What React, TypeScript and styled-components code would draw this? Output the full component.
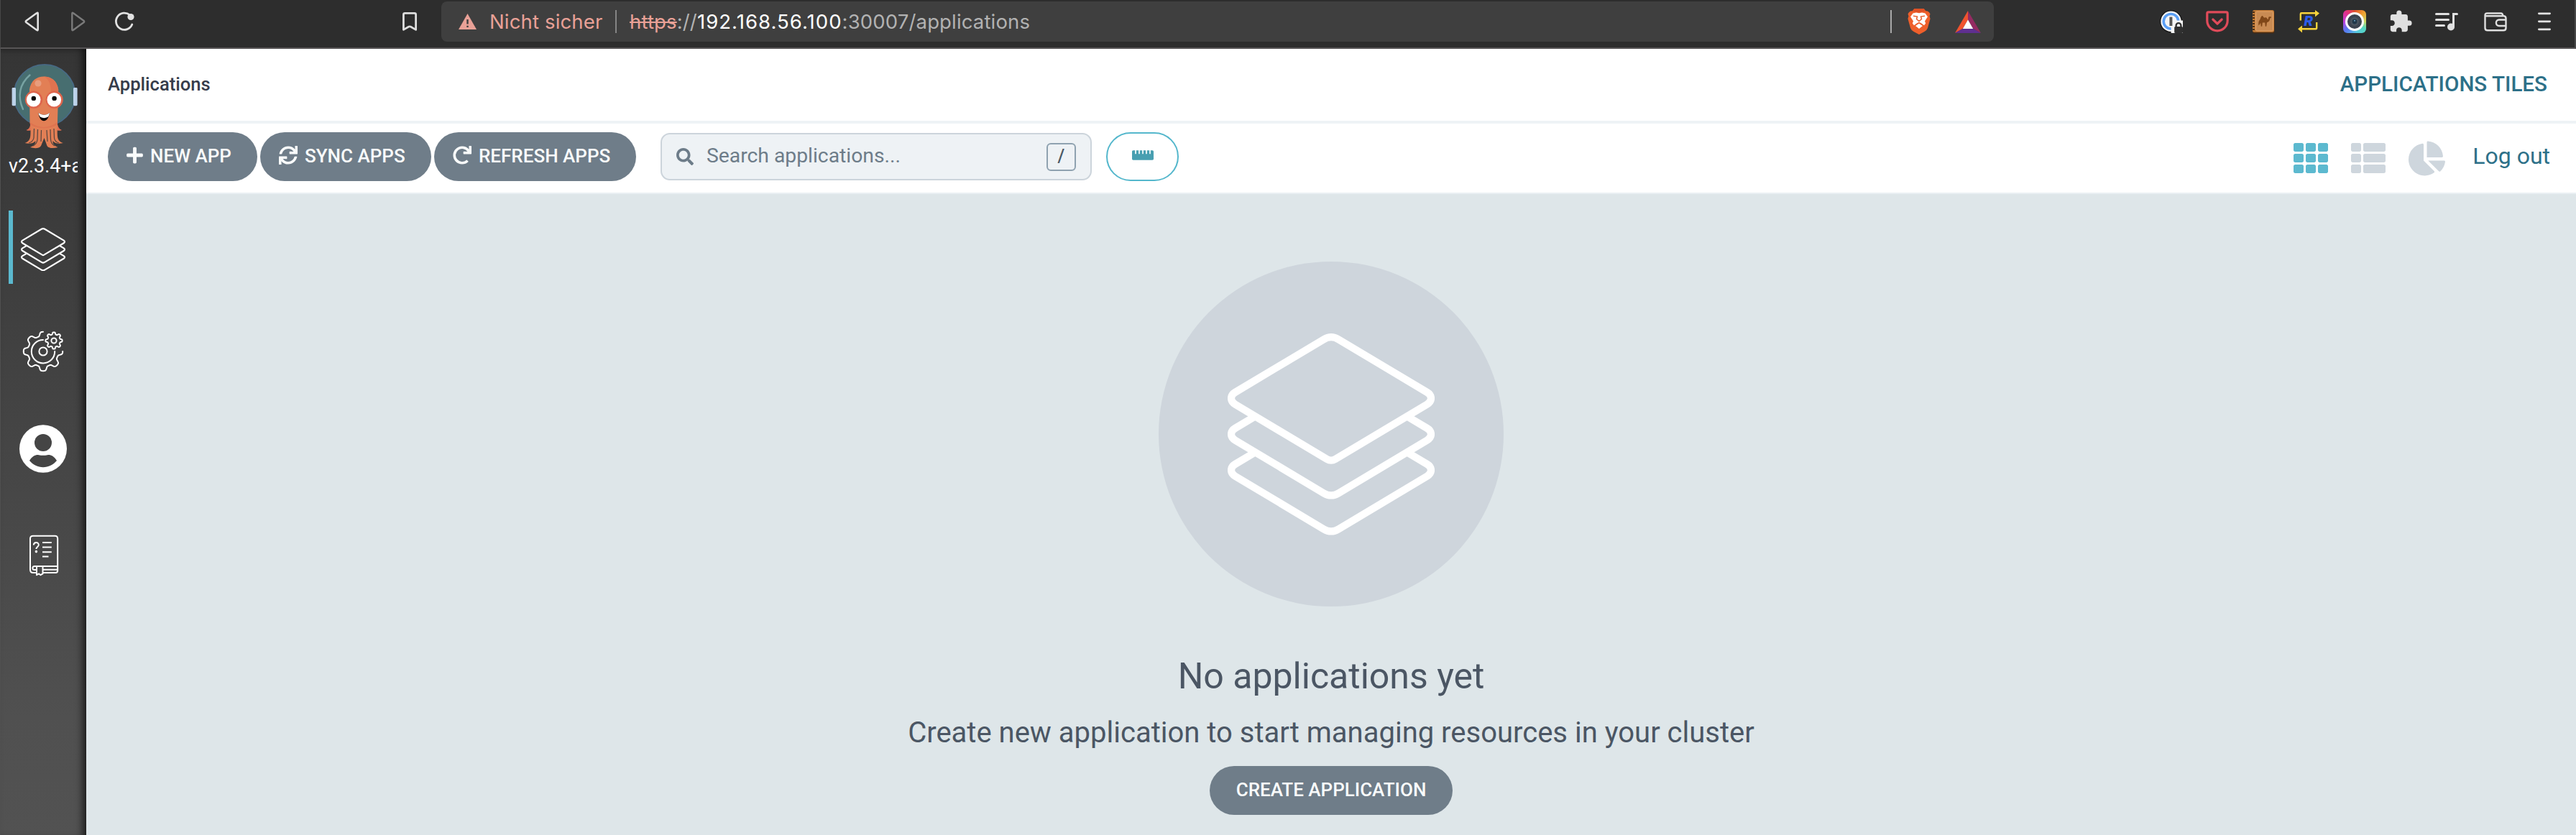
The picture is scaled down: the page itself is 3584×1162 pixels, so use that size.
import React from "react";
import styled, { createGlobalStyle } from "styled-components";
import {
  FaPlus,
  FaSync,
  FaRedo,
  FaSearch,
  FaRulerHorizontal,
  FaTh,
  FaThList,
  FaChartPie,
} from "react-icons/fa";
import { MdExtension } from "react-icons/md";

const GlobalStyle = createGlobalStyle`
  *, *::before, *::after { box-sizing: border-box; }
  body {
    margin: 0;
    background: #dee6e9;
    font-family: Roboto, "Liberation Sans", sans-serif;
    overflow: hidden;
  }
  svg { display: block; flex: none; }
`;

/* ---------- browser chrome ---------- */

const Window = styled.div`
  display: flex;
  flex-direction: column;
  width: 3584px;
  height: 1162px;
`;

const BrowserBar = styled.header`
  display: flex;
  align-items: flex-start;
  height: 68px;
  flex: none;
  background: #2d2d2d;
  border-bottom: 2px solid #575556;
  border-left: 1px solid #484848;
  border-right: 2px solid #484848;
`;

const BarGroup = styled.div<{ $left: number; $gap: number }>`
  display: flex;
  align-items: center;
  height: 60px;
  margin-left: ${(p) => p.$left}px;
  gap: ${(p) => p.$gap}px;
`;

const AddressBar = styled.div`
  display: flex;
  align-items: center;
  width: 2160px;
  height: 56px;
  margin: 2px 0 0 33px;
  padding-left: 24px;
  border-radius: 8px;
  background: #3f3f3f;
  font-family: Inter, "Liberation Sans", sans-serif;
  font-size: 27.5px;
  line-height: 56px;
  color: #b2b2b2;
  white-space: pre;
`;

const Warning = styled.span`
  width: 158px;
  margin-left: 18px;
  letter-spacing: 0.15px;
  color: #e9a197;
`;

const Divider = styled.i<{ $color: string }>`
  width: 2px;
  height: 32px;
  background: ${(p) => p.$color};
`;

const Url = styled.span`
  margin-left: 18px;
  letter-spacing: 0.15px;
  flex: 1;
`;

const Scheme = styled.span`
  color: #e9a197;
  text-decoration: line-through;
  text-decoration-thickness: 2px;
`;

const Host = styled.span`
  letter-spacing: 1.05px;
  color: #ffffff;
`;

const Shields = styled.div`
  display: flex;
  align-items: center;
  gap: 34px;
  margin: 0 18px 0 22px;
`;

/* ---------- page frame ---------- */

const Page = styled.div`
  display: flex;
  flex: 1;
  min-height: 0;
`;

const Sidebar = styled.nav`
  display: flex;
  flex-direction: column;
  width: 120px;
  flex: none;
  border-left: 1px solid #505050;
  background: linear-gradient(to bottom, #353535 0%, #505050 85%, #525252 100%);
  box-shadow: inset -12px 0 12px -8px rgba(0, 0, 0, 0.75),
    inset 0 6px 8px -6px rgba(0, 0, 0, 0.4);
`;

const LogoBox = styled.div`
  margin: 16px 0 0 11px;
`;

const Version = styled.div`
  width: 96px;
  height: 34px;
  margin: 4px 0 0 11px;
  overflow: hidden;
  color: #fff;
  font-size: 26.8px;
  line-height: 34px;
  white-space: nowrap;
`;

const NavItem = styled.a<{ $top: number; $active?: boolean }>`
  display: flex;
  align-items: center;
  justify-content: center;
  height: 102px;
  margin: ${(p) => p.$top}px 12px 0 11px;
  padding: ${(p) => (p.$active ? 6 : 0)}px 6px 0 0;
  border-left: 6px solid ${(p) => (p.$active ? "#5bb9cf" : "transparent")};
`;

const Main = styled.main`
  display: flex;
  flex-direction: column;
  flex: 1;
  min-width: 0;
`;

const TitleBar = styled.div`
  display: flex;
  align-items: center;
  justify-content: space-between;
  height: 104px;
  flex: none;
  padding: 0 40px 2px 30px;
  background: #fff;
  border-bottom: 4px solid #eef3f6;
`;

const Crumb = styled.span`
  font-size: 25.6px;
  font-weight: 500;
  line-height: 34px;
  color: #363c4a;
`;

const ViewTitle = styled.span`
  font-size: 29.6px;
  font-weight: 500;
  line-height: 36px;
  color: #2d7088;
`;

const Toolbar = styled.div`
  display: flex;
  align-items: center;
  height: 98px;
  flex: none;
  padding: 0 36px 4px 30px;
  background: #fff;
  border-bottom: 2px solid #eaf0f3;
`;

const PillButton = styled.button<{ $width: number; $ml?: number }>`
  display: flex;
  align-items: center;
  gap: 10px;
  width: ${(p) => p.$width}px;
  height: 68px;
  margin: 0 0 0 ${(p) => p.$ml ?? 0}px;
  padding: 0 0 0 26px;
  border: 0;
  border-radius: 34px;
  background: #6f7d89;
  color: #f9fbfb;
  font: 500 26px/68px Roboto, sans-serif;
  white-space: nowrap;

  & > svg {
    position: relative;
    top: -2px;
  }
`;

const PlusIcon = styled(FaPlus)`
  width: 23px;
`;

const ButtonLabel = styled.span`
  position: relative;
  top: -1px;
`;

const SearchBox = styled.div`
  display: flex;
  align-items: center;
  width: 600px;
  height: 66px;
  margin-left: 34px;
  padding: 0 20px 0 20px;
  border: 2px solid #ccd4db;
  border-radius: 13px;
  background: #eef2f5;
  color: #6d7c89;
`;

const Placeholder = styled.span`
  flex: 1;
  margin: 0 0 3px 18px;
  font-size: 28.3px;
  line-height: 36px;
`;

const KeyHint = styled.kbd`
  display: flex;
  align-items: center;
  justify-content: center;
  width: 41px;
  height: 39px;
  border: 2px solid #8fa2b0;
  border-radius: 6px;
  color: #495763;
  font: 500 25px/34px Roboto, sans-serif;
`;

const OutlineButton = styled.button`
  display: flex;
  align-items: center;
  justify-content: center;
  width: 101px;
  height: 68px;
  margin: 0 0 0 20px;
  padding: 0 0 4px;
  border: 2px solid #54b7cc;
  border-radius: 34px;
  background: #fff;
  color: #489fb1;
`;

const ViewSwitch = styled.div`
  display: flex;
  align-items: center;
  gap: 32px;
  margin: 4px 38px 0 auto;
  color: #ced6dd;
`;

const LogOut = styled.a`
  margin-bottom: 2px;
  font-size: 32px;
  line-height: 40px;
  color: #2d7088;
`;

const EmptyState = styled.section`
  display: flex;
  flex-direction: column;
  align-items: center;
  flex: 1;
  padding-top: 94px;
  background: #dee6e9;
  color: #4b5664;
`;

const EmptyIcon = styled.div`
  display: flex;
  align-items: center;
  justify-content: center;
  width: 480px;
  height: 480px;
  border-radius: 50%;
  background: #ced5dc;
`;

const EmptyTitle = styled.h4`
  margin: 67px 0 0;
  font-size: 50px;
  font-weight: 400;
  line-height: 60px;
`;

const EmptyText = styled.h5`
  margin: 24px 0 0;
  font-size: 40px;
  font-weight: 400;
  line-height: 50px;
`;

const CreateButton = styled(PillButton)`
  justify-content: center;
  margin-top: 21px;
  padding: 0;
`;

/* ---------- drawings ---------- */

const Layers = ({ width }: { width: number }) => (
  <svg width={width} height={(width * 281) / 288} viewBox="96 99.7 288 281" fill="none" stroke="#fff" strokeWidth="10.2">
    <path d="M229.7 108Q240 101.8 250.3 108L373.6 181.7C380.8 186 380.8 194 373.6 198.3L246 274.6Q240 278.2 234 274.6L106.4 198.3C99.2 194 99.2 186 106.4 181.7Z" />
    <path d="M134.3 215L106.4 231.7C99.2 236 99.2 244 106.4 248.3L229.7 322Q240 328.2 250.3 322L373.6 248.3C380.8 244 380.8 236 373.6 231.7L345.7 215" />
    <path d="M134.3 265L106.4 281.7C99.2 286 99.2 294 106.4 298.3L229.7 372Q240 378.2 250.3 372L373.6 298.3C380.8 294 380.8 286 373.6 281.7L345.7 265" />
  </svg>
);

const gearPath = (cx: number, cy: number, inner: number, outer: number, from: number, to: number) => {
  const points: string[] = [];
  const mid = (inner + outer) / 2;
  const amp = (outer - inner) / 2;
  for (let deg = from; deg <= to; deg += 1.5) {
    const t = (deg * Math.PI) / 180;
    const r = mid + (amp * Math.tanh(1.9 * Math.cos(8 * t))) / Math.tanh(1.9);
    points.push(`${(cx + r * Math.cos(t)).toFixed(2)} ${(cy + r * Math.sin(t)).toFixed(2)}`);
  }
  return `M${points.join("L")}`;
};

const Gears = () => (
  <svg width="60" height="60" viewBox="30 459 60 60" fill="none" stroke="#fff" strokeWidth="2">
    <path d={gearPath(60, 489, 21.2, 27.2, 0, 270)} strokeLinecap="round" />
    <path d="M60 473A16.2 16.2 0 1 0 76.2 489" strokeLinecap="round" />
    <circle cx="60" cy="489" r="5.6" />
    <path d={gearPath(75, 474, 8.8, 11.6, 0, 360)} />
    <circle cx="75" cy="474" r="3.6" />
  </svg>
);

const UserIcon = () => (
  <svg width="66" height="67" viewBox="0 0 66 67">
    <ellipse cx="33" cy="33.5" rx="33" ry="33.3" fill="#fff" />
    <circle cx="33" cy="25" r="12" fill="#454545" />
    <path d="M14 50C18 43.5 23 41.5 27 42.2Q33 43.4 39 42.2C43 41.5 48 43.5 52 50C47 56 40.500 59.200 33 59.200S19 56 14 50Z" fill="#454545" />
  </svg>
);

const DocsIcon = () => (
  <svg width="44" height="58" viewBox="38 744 44 58" fill="none" stroke="#fff" strokeWidth="2" strokeLinejoin="round">
    <path d="M50 797H46C43.500 797 42 795.500 42 792.500V749.500C42 747 43.500 745.800 46 745.800H76.500C79 745.800 80.200 747 80.200 749.500V788H48C44.500 788 44.500 793 48 793H50" />
    <path d="M60 797H77.500C79.500 797 80.200 796 80.200 794V788M60 792.800H80" />
    <path d="M51 789V800.200L54 798.400L56.500 800.200L59.500 798.400V789" />
    <path d="M59 755H71.800M59 761.500H71.800M59 768.200H71.800M59 774.600H67.500" />
    <path d="M46.800 758.500C47 753.500 54 754 53.800 758.500C53.600 761 50.400 761 50.400 764" />
    <circle cx="50.400" cy="767.600" r="1.100" fill="#fff" strokeWidth="1.400" />
  </svg>
);

const ArgoLogo = () => (
  <svg width="100" height="126" viewBox="12 84 100 126">
    <circle cx="62" cy="132.500" r="42.600" fill="#476e70" stroke="#486a85" strokeWidth="1.800" />
    <path d="M41.500 104.500C27 117 24 134 32 152" fill="none" stroke="#78a3a3" strokeWidth="2.400" strokeLinecap="round" />
    <rect x="16.600" y="122" width="5.400" height="25.200" rx="1.400" fill="#bcd3ea" />
    <rect x="102" y="122" width="5.600" height="25.200" rx="1.400" fill="#bcd3ea" />
    <path d="M42.500 168C42.500 176 41 179.500 36.500 181C39.500 182.500 42.500 182 44.500 180H77.500C80 182 83 182.500 86 181C82 179.500 80 176 79.500 168Z" fill="#de6c50" />
    <path d="M41.500 170L41 124.500C43 112 51 106.500 61 106.500S79.500 112 81.200 124.500L79.800 176C80 190 78.500 196 88 199C82 200.500 76.500 200 73.500 196C73.500 200.500 75 202.500 80.500 205C74 206.800 67.500 206.500 65.500 203L61.500 192L57 203C54.500 206.800 48 206.800 42 205C48 202.500 49 200.500 49.500 196C46 200 40.500 200.500 34.500 199C43.500 196 42.500 190 42.500 176Z" fill="#e27f55" />
    <path d="M61 106.500C72 106.800 79.500 113 81.200 124.500L80.500 150H71V126C70 114 66 108.500 61 106.500Z" fill="#df7350" />
    <path d="M41.500 170Q61 184 79.800 170V173.500Q61 183 42 173.500Z" fill="#df7350" />
    <path d="M47.500 179L47 192Q46 197 40 199M52.500 180L52 194Q51.500 200 46 203M57.500 181L57 197M65 181L66 197M70 180L70.500 194Q71 200 76 203M75 179L75.500 192Q76 197 82 199" fill="none" stroke="#55453f" strokeWidth="1.200" />
    <circle cx="53" cy="116" r="4.600" fill="#e89d7d" />
    <circle cx="47" cy="138.800" r="12.200" fill="#de654c" />
    <circle cx="75.600" cy="138.800" r="12.200" fill="#de654c" />
    <circle cx="46.700" cy="138.800" r="9.800" fill="#fff" />
    <circle cx="75.300" cy="138.800" r="9.800" fill="#fff" />
    <circle cx="46.800" cy="136.900" r="3.200" fill="#050505" />
    <circle cx="75.600" cy="136.900" r="3.200" fill="#050505" />
    <path d="M53.500 157C55 172 67 172 69 157Q61.500 163 53.500 157Z" fill="#050505" />
    <path d="M53.500 157Q61.500 163 69 157Q68 162 66.500 162.800Q61.500 165.500 56 162.800Q54 161 53.500 157Z" fill="#fff" />
  </svg>
);

const BackIcon = () => (
  <svg width="21" height="28" viewBox="0 0 21 28" fill="none" stroke="#e2e2e2" strokeWidth="2.600" strokeLinejoin="round">
    <path d="M18.700 3V25Q18.700 27 17 25.700L2.600 15.300Q1 14 2.600 12.700L17 2.300Q18.700 1 18.700 3Z" />
  </svg>
);

const ForwardIcon = () => (
  <svg width="21" height="28" viewBox="0 0 21 28" fill="none" stroke="#7b7b7b" strokeWidth="2.400" strokeLinejoin="round">
    <path d="M2.300 3V25Q2.300 27 4 25.700L18.400 15.300Q20 14 18.400 12.700L4 2.300Q2.300 1 2.300 3Z" />
  </svg>
);

const ReloadIcon = () => (
  <svg width="28" height="28" viewBox="0 0 28 28" fill="none">
    <path d="M21.500 4.800A11.600 11.600 0 1 0 24.800 18" stroke="#e2e2e2" strokeWidth="2.800" strokeLinecap="round" />
    <circle cx="23" cy="7.500" r="4.600" fill="#e2e2e2" />
  </svg>
);

const BookmarkIcon = () => (
  <svg width="22" height="28" viewBox="0 0 22 28" fill="none" stroke="#dedede" strokeWidth="2.800" strokeLinejoin="round">
    <path d="M2.400 25.400V4.200Q2.400 2.400 4.200 2.400H17.800Q19.600 2.400 19.600 4.200V25.400L12.500 21.200Q11 20.400 9.500 21.200Z" />
  </svg>
);

const WarningIcon = () => (
  <svg width="25" height="22" viewBox="0 0 25 22">
    <path d="M12.500 0L25 22H0Z" fill="#e9a197" />
    <path d="M12.500 8V14.500M12.500 16.800V19" stroke="#3f3f3f" strokeWidth="2.400" />
  </svg>
);

const BraveIcon = () => (
  <svg width="32" height="36" viewBox="0 0 32 36">
    <path d="M9.500 0H22.500L25.500 3.400Q29 3 31.500 7.500L30.500 10.500L31.600 14L28 27Q27 30 23.500 32L16 36L8.500 32Q5 30 4 27L.4 14L1.500 10.500L.5 7.500Q3 3 6.500 3.400Z" fill="#ee5f2b" />
    <path d="M9.500 0H22.500L25.500 3.400L16 5.500L6.500 3.400Z" fill="#dd5126" />
    <path d="M7.500 6.500L12 5.600L16 6.300L20 5.600L24.500 6.500L28 11.300L24 17.500L25.200 20.500L23 23.200L19 20.200L16 18.800L13 20.200L9 23.200L6.800 20.500L8 17.500L4 11.300Z" fill="#fff" />
    <path d="M16 20.800L21 24L16 28L11 24Z" fill="#fff" />
    <path d="M8 10.200L13.500 11L12.500 14.500L16 17.500L19.500 14.500L18.500 11L24 10.200" fill="none" stroke="#e8602f" strokeWidth="1.500" />
  </svg>
);

const BatIcon = () => (
  <svg width="36" height="31" viewBox="0 0 36 31">
    <path d="M18 0V13L10.500 25L0 31Z" fill="#f0532f" />
    <path d="M18 0L36 31L25.500 25L18 13Z" fill="#942b62" />
    <path d="M0 31L10.500 25H25.500L36 31Z" fill="#5f2f90" />
    <path d="M18 12.500L25.200 25H10.800Z" fill="#fff" />
  </svg>
);

const PasswordIcon = () => (
  <svg width="32" height="32" viewBox="0 0 32 32">
    <circle cx="15.500" cy="15.800" r="15.600" fill="#161616" />
    <circle cx="15.500" cy="15.800" r="14.200" fill="#f5f5f5" />
    <circle cx="15.500" cy="15.800" r="10.300" fill="none" stroke="#5b9ff5" strokeWidth="3.600" />
    <path d="M15.600 32V22L22 14.500H32V32Z" fill="#f5f5f5" />
    <rect x="13.400" y="9.600" width="4" height="12.400" fill="#555" />
    <rect x="20.200" y="23" width="11.800" height="9" rx="1.500" fill="#303030" />
    <path d="M22.600 24V21.500A3.400 3.400 0 0 1 29.400 21.500V24" fill="none" stroke="#303030" strokeWidth="2.400" />
  </svg>
);

const PocketIcon = () => (
  <svg width="32" height="30" viewBox="0 0 32 30" fill="none" stroke="#e04b5a" strokeWidth="3.200">
    <path d="M3.600 1.900H28.400Q30.200 1.900 30.200 3.700V13.500C30.200 21.500 24 27.800 16 27.800S1.800 21.500 1.800 13.500V3.700Q1.800 1.900 3.600 1.900Z" />
    <path d="M9.800 12L16 18L22.200 12" strokeLinecap="round" strokeLinejoin="round" />
  </svg>
);

const CamelBookIcon = () => (
  <svg width="32" height="33" viewBox="0 0 32 33">
    <rect x="1" y="1" width="30.500" height="31.600" rx="2.500" fill="#4a2d14" />
    <rect x="1" y="0" width="30" height="30.800" rx="2.500" fill="#c27a36" />
    <rect x="5.500" y="2" width="24" height="27" rx="1.500" fill="#c98b53" stroke="#e3a368" strokeWidth="1" />
    <path d="M2.500 2V30" stroke="#3a2412" strokeWidth="2.400" strokeDasharray="2 2" />
    <path d="M9.500 21.500C8.800 17.500 9.600 14.500 11.500 13C12.500 9.500 13.800 7 15.300 8.500C16.300 10 17 11.200 18.200 10.600C19.800 9.500 21 11 22 13.200C23 12.800 23.200 11.500 23.400 9.600L26.300 9L27 10.400L25.300 11.400C25 14.800 23.600 16.600 21 17.200L20.200 22.800H18.800L18.300 17.600L14.800 17.600L14.200 22.800H12.800L12 17.800L10.800 20Z" fill="#804718" />
  </svg>
);

const RepeatLetter = styled.text`
  font: italic 900 20px Roboto, sans-serif;
`;

const RepeatIcon = () => (
  <svg width="31" height="32" viewBox="0 0 31 32">
    <path d="M3.800 14.500V5.500Q3.800 4.300 5 4.300H25M26.200 17V25Q26.200 26.300 25 26.300H5" fill="none" stroke="#f7d33c" strokeWidth="2.400" />
    <path d="M24 0L30 4.500L24 9.500ZM6 21.500L0 26.300L6 31.500Z" fill="#f7d33c" />
    <RepeatLetter x="8.500" y="22.300" fill="#2b5cea">R</RepeatLetter>
  </svg>
);

const LensTile = styled.div`
  display: flex;
  align-items: center;
  justify-content: center;
  width: 32px;
  height: 32px;
  border-radius: 6px;
  background: conic-gradient(#e0502c 0deg, #f0a030 45deg, #c8d860 90deg, #55d8c0 125deg, #58c8e0 170deg, #5878f0 225deg, #c040e0 270deg, #e0308c 315deg, #e0502c 360deg);
`;

const LensIcon = () => (
  <LensTile>
    <svg width="28" height="28" viewBox="0 0 28 28">
      <circle cx="14" cy="14" r="13" fill="#fff" />
      <circle cx="14" cy="14" r="10" fill="#3b4450" />
      <circle cx="14" cy="14" r="6" fill="#4a5560" />
      <circle cx="14" cy="14" r="3.400" fill="#20384a" />
      <circle cx="14" cy="12.800" r="1" fill="#6fa5c5" />
    </svg>
  </LensTile>
);

const PlaylistIcon = () => (
  <svg width="32" height="26" viewBox="0 0 32 26" fill="none" stroke="#e0e0e0" strokeWidth="3" strokeLinecap="round">
    <path d="M1.500 2.500H18.500M1.500 10.500H18.500M1.500 18.500H12.500M25.500 20V2.500H30.500" />
    <circle cx="22" cy="20.500" r="5" fill="#e0e0e0" stroke="none" />
  </svg>
);

const WalletIcon = () => (
  <svg width="32" height="27" viewBox="0 0 32 27" fill="none" stroke="#dedede" strokeWidth="2.400" strokeLinejoin="round">
    <path d="M1.500 4.500Q1.500 1.500 4.500 1.500H23.500Q26 1.500 26.300 5Q30.500 5.300 30.500 8.500V22Q30.500 25.300 27 25.300H5Q1.500 25.300 1.500 22ZM2.200 5.200H26.500" />
    <path d="M30.500 10.500H21C15.500 10.500 15.500 19 21 19H30.500" />
  </svg>
);

const MenuIcon = () => (
  <svg width="18" height="26" viewBox="0 0 18 26" stroke="#e2e2e2" strokeWidth="2.800" strokeLinecap="round">
    <path d="M1.400 1.800H16.600M1.400 12.800H16.600M1.400 23.800H16.600" />
  </svg>
);

/* ---------- page ---------- */

export default function App() {
  return (
    <Window>
      <GlobalStyle />
      <BrowserBar>
        <BarGroup $left={33} $gap={43}>
          <BackIcon />
          <ForwardIcon />
        </BarGroup>
        <BarGroup $left={40} $gap={372}>
          <ReloadIcon />
          <BookmarkIcon />
        </BarGroup>
        <AddressBar>
          <WarningIcon />
          <Warning>Nicht sicher</Warning>
          <BarGroup $left={17} $gap={0}>
            <Divider $color="#858585" />
          </BarGroup>
          <Url>
            <Scheme>https</Scheme>://<Host>192.168.56.100</Host>:30007/applications
          </Url>
          <Divider $color="#a9a9a9" />
          <Shields>
            <BraveIcon />
            <BatIcon />
          </Shields>
        </AddressBar>
        <BarGroup $left={231} $gap={32}>
          <PasswordIcon />
          <PocketIcon />
          <CamelBookIcon />
          <RepeatIcon />
          <LensIcon />
        </BarGroup>
        <BarGroup $left={31} $gap={31}>
          <MdExtension size={34} color="#e0e0e0" />
          <PlaylistIcon />
        </BarGroup>
        <BarGroup $left={36} $gap={43}>
          <WalletIcon />
          <MenuIcon />
        </BarGroup>
      </BrowserBar>
      <Page>
        <Sidebar>
          <LogoBox>
            <ArgoLogo />
          </LogoBox>
          <Version>v2.3.4+a</Version>
          <NavItem $top={45} $active>
            <Layers width={62} />
          </NavItem>
          <NavItem $top={43}>
            <Gears />
          </NavItem>
          <NavItem $top={33}>
            <UserIcon />
          </NavItem>
          <NavItem $top={47}>
            <DocsIcon />
          </NavItem>
        </Sidebar>
        <Main>
          <TitleBar>
            <Crumb>Applications</Crumb>
            <ViewTitle>APPLICATIONS TILES</ViewTitle>
          </TitleBar>
          <Toolbar>
            <PillButton $width={208}>
              <PlusIcon size={26} />
              <ButtonLabel>NEW APP</ButtonLabel>
            </PillButton>
            <PillButton $width={238} $ml={4}>
              <FaSync size={26} />
              <ButtonLabel>SYNC APPS</ButtonLabel>
            </PillButton>
            <PillButton $width={281} $ml={4}>
              <FaRedo size={26} />
              <ButtonLabel>REFRESH APPS</ButtonLabel>
            </PillButton>
            <SearchBox>
              <FaSearch size={24} />
              <Placeholder>Search applications...</Placeholder>
              <KeyHint>/</KeyHint>
            </SearchBox>
            <OutlineButton>
              <FaRulerHorizontal size={30} />
            </OutlineButton>
            <ViewSwitch>
              <FaTh size={48} color="#5cb9cf" />
              <FaThList size={48} />
              <FaChartPie size={51} />
            </ViewSwitch>
            <LogOut>Log out</LogOut>
          </Toolbar>
          <EmptyState>
            <EmptyIcon>
              <Layers width={288} />
            </EmptyIcon>
            <EmptyTitle>No applications yet</EmptyTitle>
            <EmptyText>Create new application to start managing resources in your cluster</EmptyText>
            <CreateButton $width={338}>
              <ButtonLabel>CREATE APPLICATION</ButtonLabel>
            </CreateButton>
          </EmptyState>
        </Main>
      </Page>
    </Window>
  );
}
